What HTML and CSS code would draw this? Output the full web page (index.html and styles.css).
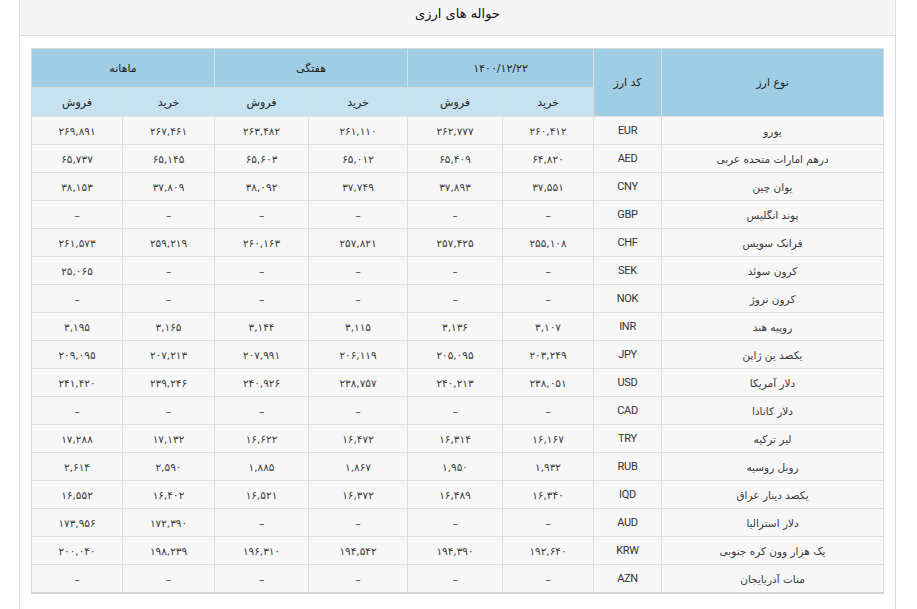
FILE: index.html
```html
<!DOCTYPE html>
<html lang="fa">
<head>
<meta charset="utf-8">
<title>حواله های ارزی</title>
<link rel="stylesheet" href="styles.css">
</head>
<body>
<div class="panel">
  <div class="panel-head">حواله های ارزی</div>
  <div class="panel-body">
    <table class="rates" dir="rtl">
      <colgroup>
        <col class="c-name"><col class="c-code"><col class="c-1"><col class="c-2"><col class="c-3"><col class="c-4"><col class="c-5"><col class="c-6">
      </colgroup>
      <thead>
        <tr class="h1">
          <th rowspan="2">نوع ارز</th>
          <th rowspan="2">کد ارز</th>
          <th colspan="2">۱۴۰۰/۱۲/۲۲</th>
          <th colspan="2">هفتگی</th>
          <th colspan="2">ماهانه</th>
        </tr>
        <tr class="h2">
          <th>خرید</th><th>فروش</th><th>خرید</th><th>فروش</th><th>خرید</th><th>فروش</th>
        </tr>
      </thead>
      <tbody>
        <tr><td>یورو</td><td class="code">EUR</td><td>۲۶۰,۴۱۲</td><td>۲۶۲,۷۷۷</td><td>۲۶۱,۱۱۰</td><td>۲۶۳,۴۸۲</td><td>۲۶۷,۴۶۱</td><td>۲۶۹,۸۹۱</td></tr>
        <tr><td>درهم امارات متحده عربی</td><td class="code">AED</td><td>۶۴,۸۲۰</td><td>۶۵,۴۰۹</td><td>۶۵,۰۱۲</td><td>۶۵,۶۰۳</td><td>۶۵,۱۴۵</td><td>۶۵,۷۳۷</td></tr>
        <tr><td>یوان چین</td><td class="code">CNY</td><td>۳۷,۵۵۱</td><td>۳۷,۸۹۳</td><td>۳۷,۷۴۹</td><td>۳۸,۰۹۲</td><td>۳۷,۸۰۹</td><td>۳۸,۱۵۳</td></tr>
        <tr><td>پوند انگلیس</td><td class="code">GBP</td><td>–</td><td>–</td><td>–</td><td>–</td><td>–</td><td>–</td></tr>
        <tr><td>فرانک سویس</td><td class="code">CHF</td><td>۲۵۵,۱۰۸</td><td>۲۵۷,۴۲۵</td><td>۲۵۷,۸۲۱</td><td>۲۶۰,۱۶۳</td><td>۲۵۹,۲۱۹</td><td>۲۶۱,۵۷۳</td></tr>
        <tr><td>کرون سوئد</td><td class="code">SEK</td><td>–</td><td>–</td><td>–</td><td>–</td><td>–</td><td>۲۵,۰۶۵</td></tr>
        <tr><td>کرون نروژ</td><td class="code">NOK</td><td>–</td><td>–</td><td>–</td><td>–</td><td>–</td><td>–</td></tr>
        <tr><td>روپیه هند</td><td class="code">INR</td><td>۳,۱۰۷</td><td>۳,۱۳۶</td><td>۳,۱۱۵</td><td>۳,۱۴۴</td><td>۳,۱۶۵</td><td>۳,۱۹۵</td></tr>
        <tr><td>یکصد ین ژاپن</td><td class="code">JPY</td><td>۲۰۳,۲۴۹</td><td>۲۰۵,۰۹۵</td><td>۲۰۶,۱۱۹</td><td>۲۰۷,۹۹۱</td><td>۲۰۷,۲۱۳</td><td>۲۰۹,۰۹۵</td></tr>
        <tr><td>دلار آمریکا</td><td class="code">USD</td><td>۲۳۸,۰۵۱</td><td>۲۴۰,۲۱۳</td><td>۲۳۸,۷۵۷</td><td>۲۴۰,۹۲۶</td><td>۲۳۹,۲۴۶</td><td>۲۴۱,۴۲۰</td></tr>
        <tr><td>دلار کانادا</td><td class="code">CAD</td><td>–</td><td>–</td><td>–</td><td>–</td><td>–</td><td>–</td></tr>
        <tr><td>لیر ترکیه</td><td class="code">TRY</td><td>۱۶,۱۶۷</td><td>۱۶,۳۱۴</td><td>۱۶,۴۷۲</td><td>۱۶,۶۲۲</td><td>۱۷,۱۳۲</td><td>۱۷,۲۸۸</td></tr>
        <tr><td>روبل روسیه</td><td class="code">RUB</td><td>۱,۹۳۲</td><td>۱,۹۵۰</td><td>۱,۸۶۷</td><td>۱,۸۸۵</td><td>۲,۵۹۰</td><td>۲,۶۱۴</td></tr>
        <tr><td>یکصد دینار عراق</td><td class="code">IQD</td><td>۱۶,۳۴۰</td><td>۱۶,۴۸۹</td><td>۱۶,۳۷۲</td><td>۱۶,۵۲۱</td><td>۱۶,۴۰۲</td><td>۱۶,۵۵۲</td></tr>
        <tr><td>دلار استرالیا</td><td class="code">AUD</td><td>–</td><td>–</td><td>–</td><td>–</td><td>۱۷۲,۳۹۰</td><td>۱۷۳,۹۵۶</td></tr>
        <tr><td>یک هزار وون کره جنوبی</td><td class="code">KRW</td><td>۱۹۲,۶۴۰</td><td>۱۹۴,۳۹۰</td><td>۱۹۴,۵۴۲</td><td>۱۹۶,۳۱۰</td><td>۱۹۸,۲۳۹</td><td>۲۰۰,۰۴۰</td></tr>
        <tr><td>منات آذربایجان</td><td class="code">AZN</td><td>–</td><td>–</td><td>–</td><td>–</td><td>–</td><td>–</td></tr>
      </tbody>
    </table>
  </div>
</div>
</body>
</html>
```

FILE: styles.css
```css
html, body {
  margin: 0;
  padding: 0;
  background: #fff;
}
body {
  font-family: "DejaVu Sans", "Noto Sans", sans-serif;
  color: #333;
}
.panel {
  margin-left: 19px;
  width: 875px;
  border-left: 1px solid #ddd;
  border-right: 1px solid #ddd;
  min-height: 609px;
  box-sizing: content-box;
}
.panel-head {
  height: 36px;
  box-sizing: border-box;
  padding-top: 5px;
  background: #f5f5f5;
  border-bottom: 1px solid #ddd;
  text-align: center;
  font-size: 13px;
  font-weight: normal;
  line-height: 18px;
  color: #111;
  direction: rtl;
}
.panel-body {
  padding: 12px 11px 0 11px;
}
.rates {
  width: 853px;
  border-collapse: collapse;
  table-layout: fixed;
  font-size: 10.5px;
  border-bottom: 2px solid #d6d6d6;
}
.c-name { width: 222px; }
.c-code { width: 68px; }
.c-1 { width: 91px; }
.c-2 { width: 95px; }
.c-3 { width: 99px; }
.c-4 { width: 94px; }
.c-5 { width: 92px; }
.c-6 { width: 91px; }
.rates th, .rates td {
  border: 1px solid #ddd;
  text-align: center;
  vertical-align: middle;
  padding: 0;
  white-space: nowrap;
}
.rates th {
  font-weight: normal;
  color: #222;
  font-size: 11px;
}
.rates .h1 th {
  background: #9fcde4;
  height: 38px;
}
.rates .h2 th {
  background: #c6e1ef;
  height: 28px;
}
.rates td {
  background: #f7f7f7;
  height: 27px;
  color: #3a3a3a;
}
.rates td.code {
  font-family: Roboto, "Liberation Sans", sans-serif;
  font-size: 11px;
  letter-spacing: -0.3px;
  color: #333;
}
```
